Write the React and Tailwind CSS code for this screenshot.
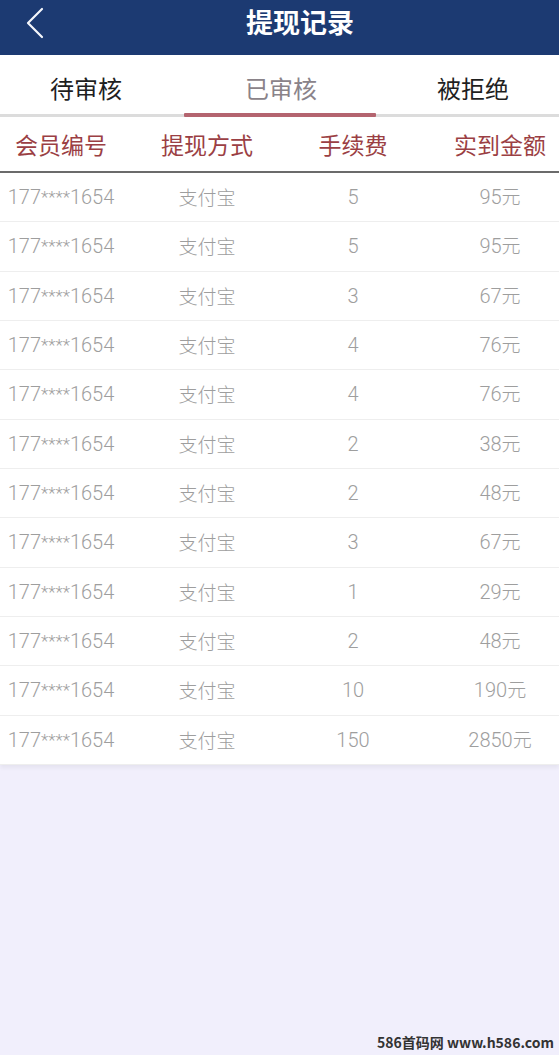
import React from "react";

const rows = [
  ["5", "95元"],
  ["5", "95元"],
  ["3", "67元"],
  ["4", "76元"],
  ["4", "76元"],
  ["2", "38元"],
  ["2", "48元"],
  ["3", "67元"],
  ["1", "29元"],
  ["2", "48元"],
  ["10", "190元"],
  ["150", "2850元"],
];

const cjk = { fontFamily: '"Noto Sans CJK SC", sans-serif' };
const num = { fontFamily: 'Roboto, "Noto Sans CJK SC", sans-serif' };

export default function App() {
  return (
    <div
      className="w-[559px] h-[1055px] bg-[#f1effc] flex flex-col relative overflow-hidden"
      style={cjk}
    >
      {/* Header */}
      <div className="h-[55px] bg-[#1c3a72] flex items-center relative shrink-0">
        <svg
          className="absolute left-[24px] top-[7px]"
          width="22"
          height="32"
          viewBox="0 0 22 32"
          fill="none"
        >
          <path d="M18 2 L4 16 L18 30" stroke="#f4f6fb" strokeWidth="2.2" strokeLinecap="round" strokeLinejoin="round" />
        </svg>
        <div className="w-full text-center text-white text-[27px] font-bold leading-none pl-[41px] -mt-[12px]">
          提现记录
        </div>
      </div>

      {/* Tabs */}
      <div className="h-[63px] bg-white relative shrink-0 flex">
        <div className="absolute left-0 right-0 top-[59px] h-[3px] bg-[#dcdcdc]" />
        <div className="absolute left-[184px] w-[192px] top-[58px] h-[4px] bg-[#b4646f] rounded-[1px]" />
        <div className="w-[172px] flex items-center justify-center text-[24px] text-[#1f1f1f] pt-[2px]">待审核</div>
        <div className="w-[218px] flex items-center justify-center text-[24px] text-[#8a8389] pt-[2px]">已审核</div>
        <div className="flex-1 flex items-center justify-center text-[24px] text-[#1f1f1f] pt-[2px] pr-[3px]">被拒绝</div>
      </div>

      {/* Table head */}
      <div className="h-[55px] bg-white grid grid-cols-[122px_170px_122px_1fr] items-center border-b-2 border-[#6b6b6b] shrink-0 text-[23px] text-[#9b3f44]">
        <div className="text-center">会员编号</div>
        <div className="text-center">提现方式</div>
        <div className="text-center">手续费</div>
        <div className="text-center pl-[27px]">实到金额</div>
      </div>

      {/* Rows */}
      <div className="bg-white shadow-[0_3px_4px_rgba(0,0,0,0.05)]">
        {rows.map((r, i) => (
          <div
            key={i}
            className="h-[49.33px] grid grid-cols-[122px_170px_122px_1fr] items-center border-b border-[#eeeeee] text-[#9e9e9e]"
          >
            <div className="text-[20px] font-light text-center" style={num}>
              177<span className="text-[17px] relative -top-[1px]">****</span>1654
            </div>
            <div className="text-[19px] text-center font-light">支付宝</div>
            <div className="text-[20px] font-light text-center" style={num}>{r[0]}</div>
            <div className="text-[20px] font-light text-center pl-[27px]" style={num}>
              {r[1].slice(0, -1)}
              <span style={cjk} className="text-[19px]">元</span>
            </div>
          </div>
        ))}
      </div>

      {/* Watermark */}
      <div className="absolute right-[5px] bottom-[6px] text-[14px] font-bold text-[#333] leading-none">
        586首码网 www.h586.com
      </div>
    </div>
  );
}
